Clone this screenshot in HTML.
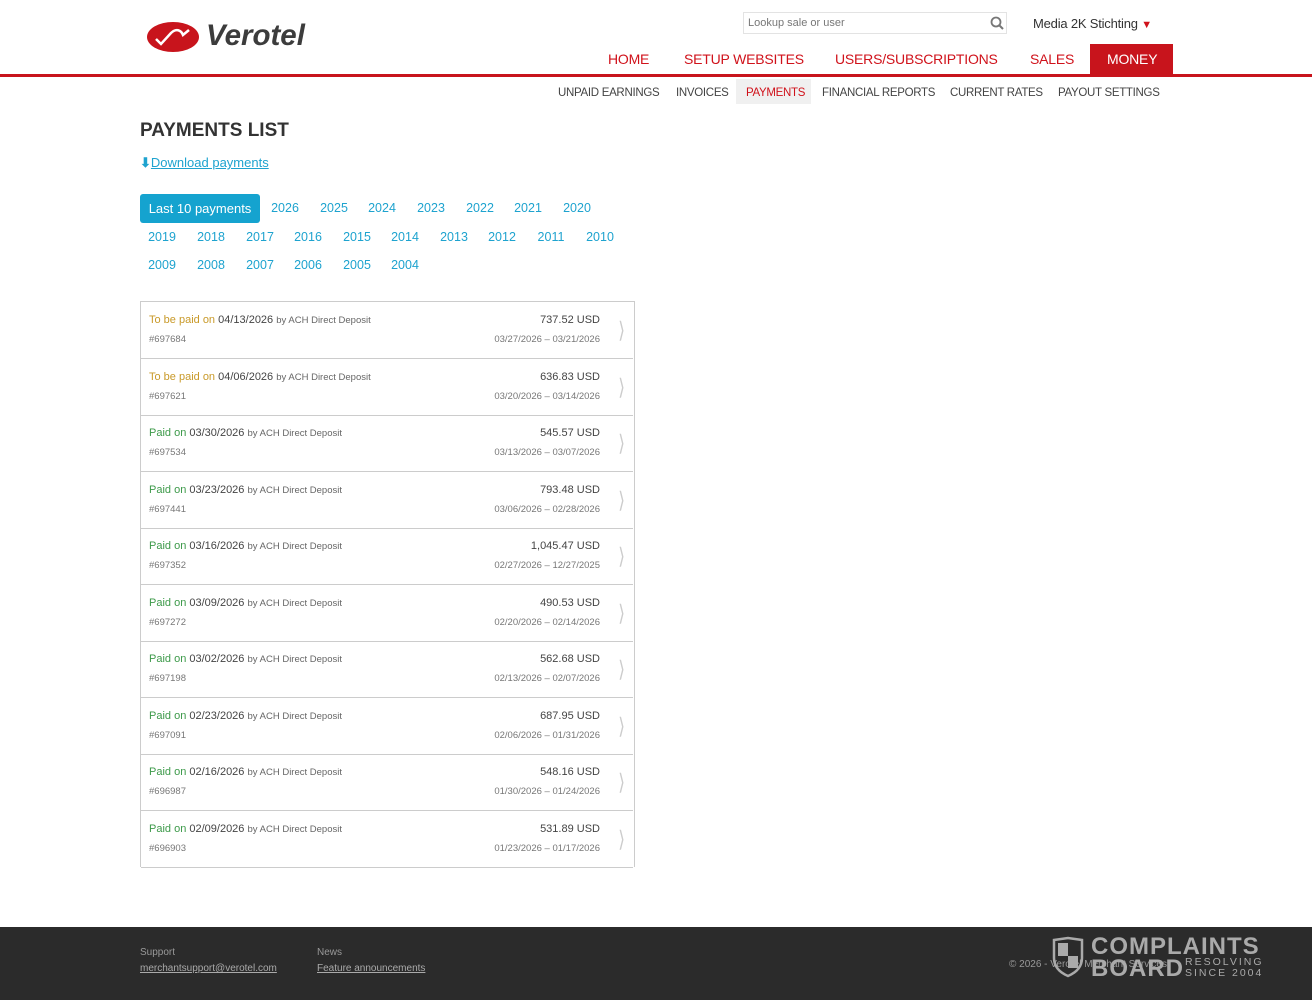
<!DOCTYPE html><html><head><meta charset="utf-8"><style>
body{margin:0;width:1312px;height:1000px;position:relative;background:#fff;font-family:"Liberation Sans",sans-serif;overflow:hidden}
.a{position:absolute;white-space:nowrap}
.nav{font-size:14px;color:#d0121b;top:51px;letter-spacing:-0.2px}
.sub{font-size:11.5px;color:#444;top:87px;letter-spacing:-0.3px}
.yr{position:absolute;font-size:12.5px;color:#1ea3cf;width:48px;text-align:center}
.row{position:absolute;left:141px;width:492px;height:56px;border-bottom:1px solid #ccc}
.row .l1{position:absolute;left:8px;top:12px;font-size:11px;color:#444}
.row .l2{position:absolute;left:8px;top:32px;font-size:9.5px;color:#777}
.row .r1{position:absolute;right:33px;top:12px;font-size:11px;color:#444}
.row .r2{position:absolute;right:33px;top:32px;font-size:9.5px;color:#777}
.row .ch{position:absolute;right:3px;top:15px;font-size:20px;color:#ccc;transform:scaleX(.5)}
.by{font-size:9.5px;color:#666}
.y{color:#c99a2a}.g{color:#3d9a4a}
</style></head><body>
<svg class="a" style="left:147px;top:21px" width="54" height="32" viewBox="0 0 54 32"><ellipse cx="26" cy="16" rx="26" ry="15" fill="#c8141c"/><path d="M9 18 L14 23 L24 12 C29 7 34 9 36 14 L42 9" stroke="#fff" stroke-width="2.5" fill="none"/></svg>
<div class="a" style="left:206px;top:19px;font-size:29.5px;font-weight:bold;font-style:italic;color:#3c3c3c">Verotel</div>
<div class="a" style="left:743px;top:12px;width:264px;height:22px;border:1px solid #e3e3e3;box-sizing:border-box"></div>
<div class="a" style="left:748px;top:17px;font-size:11px;color:#777">Lookup sale or user</div>
<svg class="a" style="left:990px;top:16px" width="14" height="14"><circle cx="6" cy="6" r="4.5" stroke="#777" stroke-width="1.8" fill="none"/><path d="M9.5 9.5 L13 13" stroke="#777" stroke-width="2"/></svg>
<div class="a" style="left:1033px;top:16px;font-size:13px;color:#333;letter-spacing:-0.2px">Media 2K Stichting <span style="color:#d0121b;font-size:11px">▼</span></div>
<div class="a" style="left:1090px;top:44px;width:83px;height:31px;background:#c8141c"></div>
<div class="a nav" style="left:608px">HOME</div>
<div class="a nav" style="left:684px">SETUP WEBSITES</div>
<div class="a nav" style="left:835px">USERS/SUBSCRIPTIONS</div>
<div class="a nav" style="left:1030px">SALES</div>
<div class="a nav" style="left:1107px;color:#fff">MONEY</div>
<div class="a" style="left:0;top:74px;width:1312px;height:3px;background:#c8141c"></div>
<div class="a" style="left:736px;top:79px;width:75px;height:25px;background:#f0f0f0"></div>
<div class="a sub" style="left:558px">UNPAID EARNINGS</div>
<div class="a sub" style="left:676px">INVOICES</div>
<div class="a sub" style="left:746px;color:#d0121b">PAYMENTS</div>
<div class="a sub" style="left:822px">FINANCIAL REPORTS</div>
<div class="a sub" style="left:950px">CURRENT RATES</div>
<div class="a sub" style="left:1058px">PAYOUT SETTINGS</div>
<div class="a" style="left:140px;top:120px;font-size:19px;font-weight:bold;color:#333">PAYMENTS LIST</div>
<div class="a" style="left:140px;top:155px;font-size:13px;color:#1ea3cf"><span style="font-weight:bold">⬇</span><span style="text-decoration:underline">Download payments</span></div>
<div class="a" style="left:140px;top:194px;width:120px;height:29px;background:#15a3cf;border-radius:3px;color:#fff;font-size:13px;line-height:29px;text-align:center">Last 10 payments</div>
<div class="yr" style="left:261px;top:201px">2026</div><div class="yr" style="left:310px;top:201px">2025</div><div class="yr" style="left:358px;top:201px">2024</div><div class="yr" style="left:407px;top:201px">2023</div><div class="yr" style="left:456px;top:201px">2022</div><div class="yr" style="left:504px;top:201px">2021</div><div class="yr" style="left:553px;top:201px">2020</div>
<div class="yr" style="left:138px;top:230px">2019</div><div class="yr" style="left:187px;top:230px">2018</div><div class="yr" style="left:236px;top:230px">2017</div><div class="yr" style="left:284px;top:230px">2016</div><div class="yr" style="left:333px;top:230px">2015</div><div class="yr" style="left:381px;top:230px">2014</div><div class="yr" style="left:430px;top:230px">2013</div><div class="yr" style="left:478px;top:230px">2012</div><div class="yr" style="left:527px;top:230px">2011</div><div class="yr" style="left:576px;top:230px">2010</div>
<div class="yr" style="left:138px;top:258px">2009</div><div class="yr" style="left:187px;top:258px">2008</div><div class="yr" style="left:236px;top:258px">2007</div><div class="yr" style="left:284px;top:258px">2006</div><div class="yr" style="left:333px;top:258px">2005</div><div class="yr" style="left:381px;top:258px">2004</div>
<div class="a" style="left:140px;top:301px;width:493px;height:565px;border:1px solid #ccc;border-bottom:none"></div>
<div class="row" style="top:302px"><div class="l1"><span class="y">To be paid on</span> 04/13/2026 <span class="by">by ACH Direct Deposit</span></div><div class="l2">#697684</div><div class="r1">737.52 USD</div><div class="r2">03/27/2026 – 03/21/2026</div><div class="ch">❭</div></div>
<div class="row" style="top:359px"><div class="l1"><span class="y">To be paid on</span> 04/06/2026 <span class="by">by ACH Direct Deposit</span></div><div class="l2">#697621</div><div class="r1">636.83 USD</div><div class="r2">03/20/2026 – 03/14/2026</div><div class="ch">❭</div></div>
<div class="row" style="top:415px"><div class="l1"><span class="g">Paid on</span> 03/30/2026 <span class="by">by ACH Direct Deposit</span></div><div class="l2">#697534</div><div class="r1">545.57 USD</div><div class="r2">03/13/2026 – 03/07/2026</div><div class="ch">❭</div></div>
<div class="row" style="top:472px"><div class="l1"><span class="g">Paid on</span> 03/23/2026 <span class="by">by ACH Direct Deposit</span></div><div class="l2">#697441</div><div class="r1">793.48 USD</div><div class="r2">03/06/2026 – 02/28/2026</div><div class="ch">❭</div></div>
<div class="row" style="top:528px"><div class="l1"><span class="g">Paid on</span> 03/16/2026 <span class="by">by ACH Direct Deposit</span></div><div class="l2">#697352</div><div class="r1">1,045.47 USD</div><div class="r2">02/27/2026 – 12/27/2025</div><div class="ch">❭</div></div>
<div class="row" style="top:585px"><div class="l1"><span class="g">Paid on</span> 03/09/2026 <span class="by">by ACH Direct Deposit</span></div><div class="l2">#697272</div><div class="r1">490.53 USD</div><div class="r2">02/20/2026 – 02/14/2026</div><div class="ch">❭</div></div>
<div class="row" style="top:641px"><div class="l1"><span class="g">Paid on</span> 03/02/2026 <span class="by">by ACH Direct Deposit</span></div><div class="l2">#697198</div><div class="r1">562.68 USD</div><div class="r2">02/13/2026 – 02/07/2026</div><div class="ch">❭</div></div>
<div class="row" style="top:698px"><div class="l1"><span class="g">Paid on</span> 02/23/2026 <span class="by">by ACH Direct Deposit</span></div><div class="l2">#697091</div><div class="r1">687.95 USD</div><div class="r2">02/06/2026 – 01/31/2026</div><div class="ch">❭</div></div>
<div class="row" style="top:754px"><div class="l1"><span class="g">Paid on</span> 02/16/2026 <span class="by">by ACH Direct Deposit</span></div><div class="l2">#696987</div><div class="r1">548.16 USD</div><div class="r2">01/30/2026 – 01/24/2026</div><div class="ch">❭</div></div>
<div class="row" style="top:811px"><div class="l1"><span class="g">Paid on</span> 02/09/2026 <span class="by">by ACH Direct Deposit</span></div><div class="l2">#696903</div><div class="r1">531.89 USD</div><div class="r2">01/23/2026 – 01/17/2026</div><div class="ch">❭</div></div>
<div class="a" style="left:0;top:927px;width:1312px;height:73px;background:#2b2b2b"></div>
<div class="a" style="left:140px;top:947px;font-size:10px;color:#999">Support</div>
<div class="a" style="left:140px;top:963px;font-size:10px;color:#aaa;text-decoration:underline">merchantsupport@verotel.com</div>
<div class="a" style="left:317px;top:947px;font-size:10px;color:#999">News</div>
<div class="a" style="left:317px;top:963px;font-size:10px;color:#aaa;text-decoration:underline">Feature announcements</div>
<div class="a" style="left:1009px;top:959px;font-size:10px;color:#999">© 2026 - Verotel Merchant Services</div>
<svg class="a" style="left:1051px;top:936px" width="34" height="42"><path d="M3 4 L17 2 L31 4 L31 22 C31 32 24 37 17 40 C10 37 3 32 3 22 Z" fill="none" stroke="#aaa" stroke-width="2.5"/><rect x="7" y="7" width="10" height="13" fill="#aaa"/><rect x="17" y="20" width="10" height="12" fill="#aaa"/></svg>
<div class="a" style="left:1091px;top:933px;font-size:24px;font-weight:bold;color:#aaa;letter-spacing:1px">COMPLAINTS</div>
<div class="a" style="left:1091px;top:955px;font-size:24px;font-weight:bold;color:#aaa;letter-spacing:1px">BOARD</div>
<div class="a" style="left:1185px;top:957px;font-size:10.5px;color:#aaa;letter-spacing:2px;line-height:11px">RESOLVING<br>SINCE 2004</div>
</body></html>
